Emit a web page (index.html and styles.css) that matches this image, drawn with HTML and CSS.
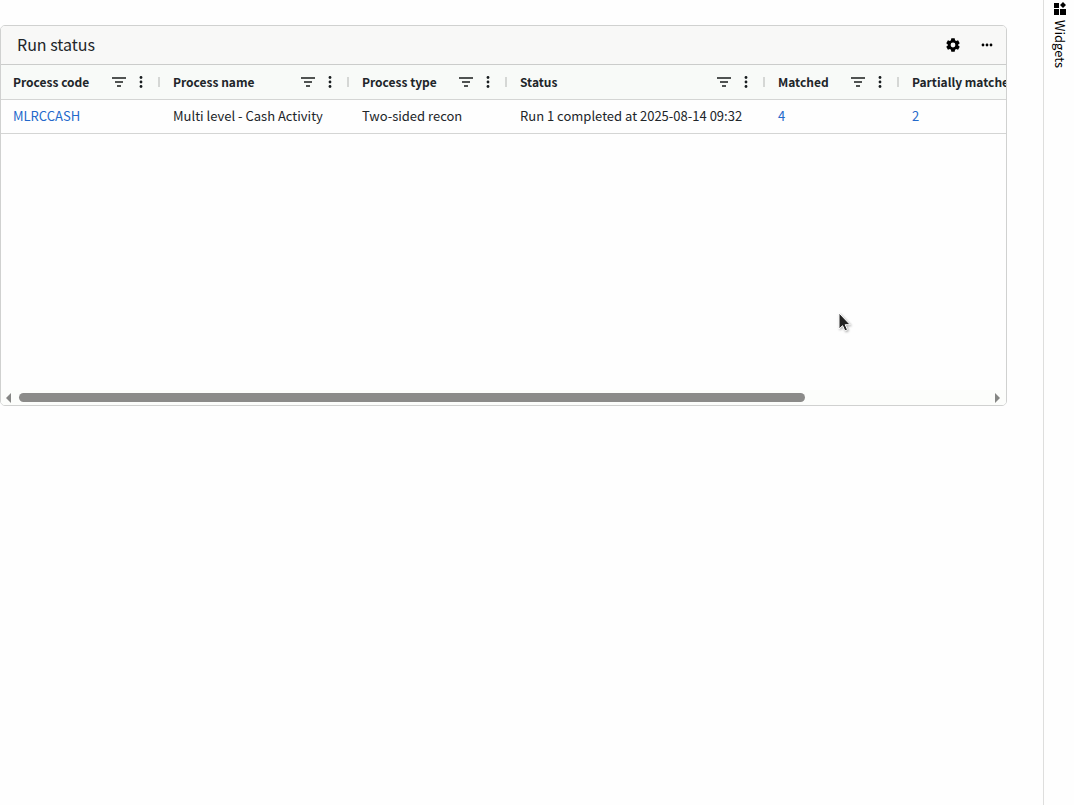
FILE: index.html
```html
<!DOCTYPE html>
<html lang="en">
<head>
<meta charset="utf-8">
<title>Run status</title>
<link rel="stylesheet" href="styles.css">
</head>
<body>
<svg class="defs" aria-hidden="true">
  <symbol id="filter" viewBox="0 0 14 10"><path d="M0 0h14v2H0zM3 4h8v2H3zM5 8h4v2H5z"/></symbol>
  <symbol id="menu" viewBox="0 0 4 12"><circle cx="2" cy="1.5" r="1.4"/><circle cx="2" cy="6" r="1.4"/><circle cx="2" cy="10.5" r="1.4"/></symbol>
</svg>
<div class="app">
  <main class="workspace">
    <section class="widget">
      <header class="widget-head">
        <h1 class="widget-title">Run status</h1>
        <button class="icon-btn" aria-label="Settings"><svg width="16" height="16" viewBox="0 0 24 24"><path fill-rule="evenodd" d="M9.5 2h5l.6 3 1.6.9 2.9-1 2.5 4.3-2.3 2v1.6l2.3 2-2.5 4.3-2.9-1-1.6.9-.6 3h-5l-.6-3-1.6-.9-2.9 1-2.5-4.3 2.3-2v-1.6l-2.3-2 2.5-4.3 2.9 1 1.6-.9zM12 8.4a3.6 3.6 0 1 0 0 7.2 3.6 3.6 0 0 0 0-7.2z"/></svg></button>
        <button class="icon-btn" aria-label="More"><svg width="12" height="4" viewBox="0 0 12 4"><circle cx="2" cy="2" r="1.4"/><circle cx="6" cy="2" r="1.4"/><circle cx="10" cy="2" r="1.4"/></svg></button>
      </header>
      <div class="grid-view">
        <table class="grid">
          <colgroup><col class="c-code"><col class="c-name"><col class="c-type"><col class="c-status"><col class="c-matched"><col class="c-partial"></colgroup>
          <thead>
            <tr>
              <th><div class="head-cell"><span class="label">Process code</span><button class="filter-btn" aria-label="Filter"><svg width="14" height="10"><use href="#filter"/></svg></button><button class="menu-btn" aria-label="Column menu"><svg width="4" height="12"><use href="#menu"/></svg></button><i class="grip"></i></div></th>
              <th><div class="head-cell"><span class="label">Process name</span><button class="filter-btn" aria-label="Filter"><svg width="14" height="10"><use href="#filter"/></svg></button><button class="menu-btn" aria-label="Column menu"><svg width="4" height="12"><use href="#menu"/></svg></button><i class="grip"></i></div></th>
              <th><div class="head-cell"><span class="label">Process type</span><button class="filter-btn" aria-label="Filter"><svg width="14" height="10"><use href="#filter"/></svg></button><button class="menu-btn" aria-label="Column menu"><svg width="4" height="12"><use href="#menu"/></svg></button><i class="grip"></i></div></th>
              <th><div class="head-cell"><span class="label">Status</span><button class="filter-btn" aria-label="Filter"><svg width="14" height="10"><use href="#filter"/></svg></button><button class="menu-btn" aria-label="Column menu"><svg width="4" height="12"><use href="#menu"/></svg></button><i class="grip"></i></div></th>
              <th><div class="head-cell"><span class="label">Matched</span><button class="filter-btn" aria-label="Filter"><svg width="14" height="10"><use href="#filter"/></svg></button><button class="menu-btn" aria-label="Column menu"><svg width="4" height="12"><use href="#menu"/></svg></button><i class="grip"></i></div></th>
              <th><div class="head-cell"><span class="label">Partially matched</span></div></th>
            </tr>
          </thead>
          <tbody>
            <tr>
              <td><a href="#">MLRCCASH</a></td>
              <td>Multi level - Cash Activity</td>
              <td>Two-sided recon</td>
              <td>Run 1 completed at 2025-08-14 09:32</td>
              <td><a href="#">4</a></td>
              <td><a href="#">2</a></td>
            </tr>
          </tbody>
        </table>
      </div>
      <div class="scrollbar">
        <svg width="5" height="10" viewBox="0 0 5 10"><path d="M5 0v10L0 5z"/></svg>
        <div class="track"><div class="thumb"></div></div>
        <svg width="5" height="10" viewBox="0 0 5 10"><path d="M0 0v10l5-5z"/></svg>
      </div>
    </section>
    <svg class="cursor" width="14" height="20" viewBox="0 0 14 20" aria-hidden="true"><path d="M1 1v16l3.6-3.3 2.3 5.2 2.6-1.1-2.3-5.1h5z" fill="#222" stroke="#fff"/></svg>
  </main>
  <aside class="rail">
    <button class="rail-btn"><svg width="12" height="13" viewBox="0 0 12 13"><path d="M0 1h5v5H0zM0 7h5v6H0zM6 7h6v6H6zM9 0l3 3-3 3-3-3z"/></svg><span>Widgets</span></button>
  </aside>
</div>
</body>
</html>
```
FILE: styles.css
```css
* { box-sizing: border-box; }
body {
  margin: 0;
  background: #fefefe;
  color: #212529;
  font: 13px/20px "Noto Sans CJK SC", "Noto Sans", sans-serif;
}
button {
  display: flex;
  align-items: center;
  justify-content: center;
  padding: 0;
  border: 0;
  background: none;
  color: inherit;
  font: inherit;
}
.defs { position: absolute; width: 0; height: 0; }
.app { display: flex; min-height: 100vh; }
.workspace { position: relative; flex: 1; min-width: 0; padding: 25px 36px 0 0; }
.widget {
  display: flex;
  flex-direction: column;
  min-height: 381px;
  border: 1px solid #d0d1d0;
  border-radius: 5px;
  overflow: hidden;
}
.widget-head {
  display: flex;
  align-items: center;
  gap: 10px;
  height: 39px;
  padding: 0 7px 0 16px;
  border-bottom: 1px solid #cbcccb;
  background: #f8f8f7;
}
.widget-title { flex: 1; margin: 0; padding-bottom: 2px; font-size: 16px; line-height: 24px; font-weight: 400; }
.icon-btn { width: 24px; height: 24px; color: #000; }
.grid-view { flex: 1; overflow: hidden; }
.grid { width: 1080px; table-layout: fixed; border-collapse: separate; border-spacing: 0; }
.c-code { width: 160px; }
.c-name { width: 189px; }
.c-type { width: 158px; }
.c-status { width: 258px; }
.c-matched { width: 134px; }
.grid th { padding: 0 1px 0 12px; height: 35px; border-bottom: 1px solid #d4d5d4; background: #f8faf8; font-size: 12px; text-align: left; font-weight: 700; }
.grid td { padding: 0 12px 2px; height: 34px; border-bottom: 1px solid #d4d5d4; white-space: nowrap; }
.grid a { color: #2369cb; text-decoration: none; }
.head-cell { display: flex; align-items: center; white-space: nowrap; }
.label { flex: 1; }
.filter-btn { width: 14px; height: 20px; color: #505352; }
.menu-btn { width: 4px; height: 20px; margin: 0 15px 0 13px; color: #181d1f; }
.grip { width: 2px; height: 10px; background: #d5d7d5; }
.scrollbar { display: flex; align-items: center; gap: 7px; height: 15px; padding: 0 6px 0 5px; background: #fcfdfb; }
.track { flex: 1; }
.thumb { width: 81%; height: 9px; margin-left: 1px; border-radius: 5px; background: #8b8b89; }
.scrollbar svg { fill: #858684; }
svg { display: block; fill: currentColor; }
.cursor { position: absolute; left: 838px; top: 312px; filter: drop-shadow(1px 1px 1px #0005); }
.rail { width: 31px; border-left: 1px solid #dededd; }
.rail-btn { width: 100%; flex-direction: column; gap: 5px; padding: 2px 0 0 2px; color: #000; }
.rail-btn span { writing-mode: vertical-rl; line-height: 20px; }
```
